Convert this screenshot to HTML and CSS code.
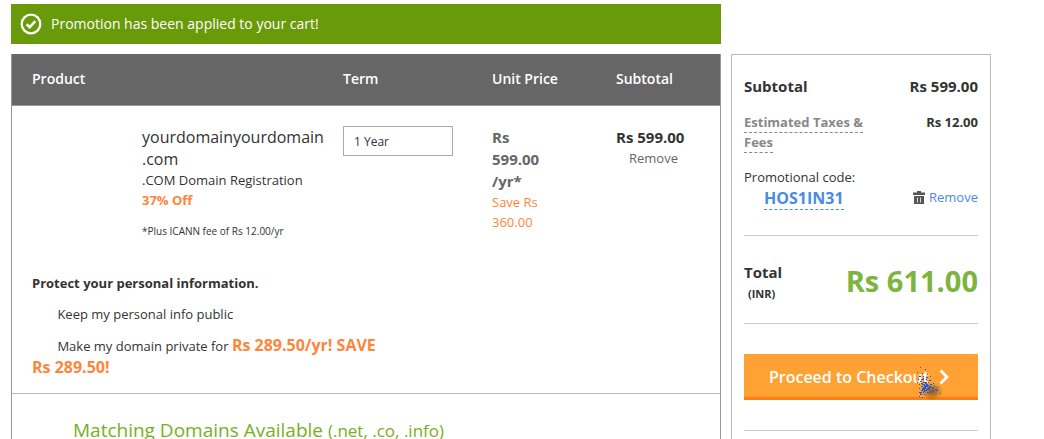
FILE: index.html
```html
<!DOCTYPE html>
<html lang="en">
<head>
    <meta charset="UTF-8">
    <meta name="viewport" content="width=device-width, initial-scale=1.0">
    <title>Shopping Cart</title>
    <link rel="stylesheet" href="styles.css">
</head>
<body>
    <div class="page">
        <main class="main">
            <div class="notice" role="status">
                <svg class="notice-icon" viewBox="0 0 22 22" aria-hidden="true">
                    <circle cx="11" cy="11" r="9.3" fill="none" stroke="#fff" stroke-width="2.3"/>
                    <path d="M6.6 11.2l3.1 3 5.6-6" fill="none" stroke="#fff" stroke-width="2.6"/>
                </svg>
                Promotion has been applied to your cart!
            </div>

            <div class="cart">
                <table class="items">
                    <colgroup>
                        <col>
                        <col class="col-term">
                        <col class="col-price">
                        <col class="col-subtotal">
                    </colgroup>
                    <thead>
                        <tr>
                            <th>Product</th>
                            <th>Term</th>
                            <th>Unit Price</th>
                            <th>Subtotal</th>
                        </tr>
                    </thead>
                    <tbody>
                        <tr>
                            <td class="product">
                                <div class="name">yourdomainyourdomain<br>.com</div>
                                <div>.COM Domain Registration</div>
                                <div class="off">37% Off</div>
                                <div class="fee">*Plus ICANN fee of Rs 12.00/yr</div>
                            </td>
                            <td>
                                <select class="term" aria-label="Term">
                                    <option>1 Year</option>
                                </select>
                            </td>
                            <td>
                                <div class="unit-price">Rs<br>599.00<br>/yr*</div>
                                <div class="save">Save Rs<br>360.00</div>
                            </td>
                            <td>
                                <div class="price">Rs 599.00</div>
                                <a href="#" class="remove-item">Remove</a>
                            </td>
                        </tr>
                    </tbody>
                </table>

                <div class="privacy">
                    <h2>Protect your personal information.</h2>
                    <div class="choice">
                        <input type="radio" name="privacy" id="public">
                        <label for="public">Keep my personal info public</label>
                    </div>
                    <div class="choice">
                        <input type="radio" name="privacy" id="private">
                        <label for="private">Make my domain private for <strong>Rs 289.50/yr! SAVE<br>Rs 289.50!</strong></label>
                    </div>
                </div>

                <h3 class="matching">Matching Domains Available <small>(.net, .co, .info)</small></h3>
            </div>
        </main>

        <aside class="summary">
            <div class="line subtotal">
                <span>Subtotal</span>
                <span>Rs 599.00</span>
            </div>
            <div class="line taxes">
                <a href="#" class="tax-label"><span>Estimated Taxes &amp;<br>Fees</span></a>
                <span>Rs 12.00</span>
            </div>
            <div class="promo-label">Promotional code:</div>
            <div class="line promo">
                <a href="#" class="code">HOS1IN31</a>
                <a href="#" class="remove-code">
                    <svg class="trash" viewBox="0 0 12 13" aria-hidden="true">
                        <path d="M4 0h4v1.5h4V4H0V1.5h4z" fill="#555"/>
                        <path d="M1 5h10v8H1z" fill="#555"/>
                        <path d="M4.5 6.5v5M7.5 6.5v5" stroke="#ddd"/>
                    </svg>
                    Remove
                </a>
            </div>
            <div class="line total">
                <div class="total-label">Total<small>(INR)</small></div>
                <div class="amount">Rs 611.00</div>
            </div>
            <div class="checkout">
                <button type="button">
                    Proceed to Checkout
                    <svg class="chevron" viewBox="0 0 10 16" aria-hidden="true">
                        <path d="M1.5 1.5L8 8l-6.5 6.5" fill="none" stroke="#fff" stroke-width="2.8"/>
                    </svg>
                </button>
                <svg class="pointer" viewBox="0 -0.5 30 36" aria-hidden="true">
                    <defs>
                        <radialGradient id="shade">
                            <stop offset="0" stop-color="#4a3010" stop-opacity=".65"/>
                            <stop offset="1" stop-color="#4a3010" stop-opacity="0"/>
                        </radialGradient>
                    </defs>
                    <ellipse cx="18" cy="25" rx="11" ry="9" fill="url(#shade)"/>
                    <path d="M6 1h1M11 3h1M3 6h1M8 7h1M13 8h1M5 10h2M9 10h1M12 11h2M16 10h1M4 13h1M7 13h3M12 13h1M15 14h2M3 16h1M6 15h2M9 16h4M14 16h1M5 18h1M8 18h3M12 18h2M16 18h2M19 17h1M7 20h2M10 20h4M15 20h2M20 20h1M5 22h1M8 22h4M13 22h3M18 22h2M23 21h1M7 24h2M10 24h3M15 24h1M22 24h2M5 26h3M9 26h1M13 26h2M19 25h1M6 28h2M10 28h1M26 27h1M8 31h1M5 30h1" stroke="#1558e8"/>
                    <path d="M9 12h1M7 17h2M11 17h2M10 19h3M13 19h2M9 21h3M14 21h3M17 21h2M8 23h3M12 23h3M20 23h3M9 25h2M6 27h1" stroke="#2b63d0"/>
                </svg>
            </div>
        </aside>
    </div>
</body>
</html>
```

FILE: styles.css
```css
* {
    box-sizing: border-box;
}
body {
    margin: 0;
    background: #fff;
    color: #333;
    font-family: "Open Sans", "Noto Sans", sans-serif;
    font-size: 13px;
    line-height: 20px;
}
a {
    color: inherit;
    text-decoration: none;
}
.page {
    display: flex;
    gap: 10px;
    max-width: 991px;
    min-height: 100vh;
    padding: 4px 0 0 11px;
}
.main {
    flex: 1;
    display: flex;
    flex-direction: column;
    gap: 10px;
}
.notice {
    display: flex;
    align-items: center;
    gap: 9px;
    height: 40px;
    padding: 0 9px;
    background: #689a09;
    color: #fff;
    font-size: 14px;
}
.notice-icon {
    width: 22px;
    height: 22px;
}

/* cart table */
.cart {
    flex: 1;
    border: 1px solid #999;
    border-top: 0;
    border-bottom: 0;
}
.items {
    width: 100%;
    table-layout: fixed;
    border-collapse: collapse;
}
.col-term {
    width: 149px;
}
.col-price,
.col-subtotal {
    width: 124px;
}
.items th {
    height: 51px;
    padding: 0 0 0 20px;
    background: #666;
    border-bottom: 1px solid #999;
    color: #fff;
    font-size: 14px;
    font-weight: 600;
    text-align: left;
}
.items td {
    padding: 20px 0 0 20px;
    vertical-align: top;
}
.items .product {
    padding-left: 130px;
}
.name {
    font-size: 16px;
    line-height: 22px;
}
.off {
    color: #ff8539;
    font-weight: 700;
}
.fee {
    margin-top: 11px;
    font-size: 10px;
}
.term {
    display: block;
    width: 110px;
    height: 30px;
    padding: 2px 10px 0;
    border: 1px solid #aaa;
    border-radius: 0;
    background: #fff;
    color: #333;
    font: 12px "Open Sans", sans-serif;
    appearance: none;
}
.unit-price {
    color: #666;
    font-size: 15px;
    font-weight: 700;
    line-height: 22px;
}
.save {
    color: #ff8539;
}
.price {
    font-size: 15px;
    font-weight: 700;
    line-height: 22px;
}
.remove-item {
    margin-left: 13px;
    color: #666;
}

.privacy {
    padding: 32px 20px 14px;
    border-bottom: 1px solid #bbb;
}
.privacy h2 {
    margin: 0;
    font-size: 13px;
    line-height: 20px;
}
.choice {
    margin-top: 10px;
    line-height: 22px;
}
.choice input {
    width: 14px;
    height: 14px;
    margin: 0 8px 0 0;
    vertical-align: middle;
    appearance: none;
}
.choice strong {
    color: #ff8539;
    font-size: 16px;
    line-height: 20px;
}
.matching {
    margin: 22px 0 0 61px;
    color: #77b01d;
    font-size: 19px;
    font-weight: 400;
    line-height: 28px;
}
.matching small {
    font-size: 17px;
}

/* order summary */
.summary {
    width: 260px;
    margin-top: 50px;
    padding: 20px 12px 0;
    border: 1px solid #bbb;
    border-bottom: 0;
}
.line {
    display: flex;
    justify-content: space-between;
}
.subtotal {
    font-size: 15px;
    font-weight: 700;
    line-height: 22px;
}
.taxes {
    margin-top: 15px;
    font-weight: 700;
}
.tax-label {
    color: #888;
}
.tax-label span {
    padding-bottom: 1px;
    border-bottom: 1px dashed #888;
}
.promo-label {
    margin-top: 15px;
}
.promo {
    padding: 0 0 25px 20px;
    border-bottom: 1px solid #ccc;
    color: #4a8ae6;
}
.code {
    border-bottom: 1px dashed #4a8ae6;
    font-size: 16px;
    font-weight: 700;
    line-height: 22px;
}
.remove-code {
    display: flex;
    align-items: center;
    gap: 4px;
    height: 20px;
}
.trash {
    width: 12px;
    height: 13px;
}
.total {
    height: 88px;
    padding-top: 25px;
    border-bottom: 1px solid #ccc;
}
.total-label {
    font-size: 15px;
    font-weight: 700;
    line-height: 22px;
}
.total-label small {
    display: block;
    padding-left: 4px;
    font-size: 11px;
}
.amount {
    color: #7db43f;
    font-size: 29px;
    font-weight: 700;
    line-height: 40px;
}
.checkout {
    position: relative;
    padding: 30px 0;
    border-bottom: 1px solid #ccc;
}
.checkout button {
    display: flex;
    align-items: center;
    justify-content: center;
    gap: 10px;
    width: 100%;
    height: 46px;
    padding: 2px 4px 0 0;
    border: 0;
    border-bottom: 3px solid #ff7f12;
    background: #ffa133;
    color: #fff;
    font: 600 16px "Open Sans", sans-serif;
}
.chevron {
    width: 10px;
    height: 16px;
}
.pointer {
    position: absolute;
    top: 42px;
    right: 34px;
    width: 30px;
    height: 36px;
}
```
